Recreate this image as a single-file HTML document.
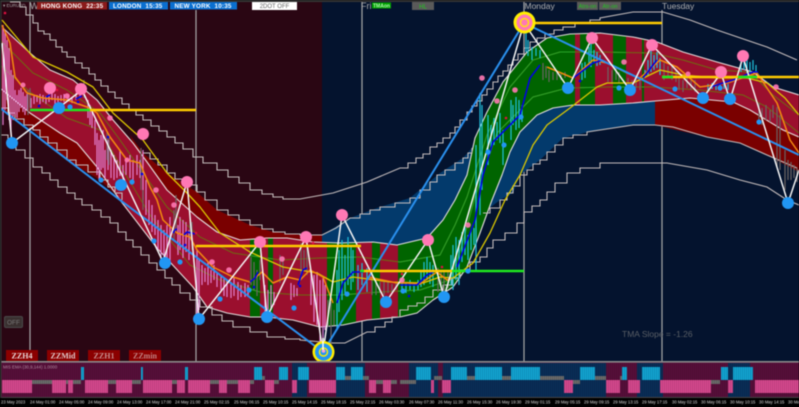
<!DOCTYPE html>
<html><head><meta charset="utf-8"><style>
html,body{margin:0;padding:0;background:#000;width:799px;height:407px;overflow:hidden}
svg{display:block;filter:blur(.4px)}
text{font-family:"Liberation Sans",sans-serif}
</style></head><body>
<svg xmlns="http://www.w3.org/2000/svg" width="799" height="407" viewBox="0 0 799 407">
<defs>
<clipPath id="ch"><path d="M0,22 3,28 30,53 50,70 73,80 97,100 113,120 133,143 147,162 167,190 197,217 217,232 240,240 267,238 287,238 313,242 340,243 373,242 397,245 427,238 443,220 455,200 467,175 475,138 487,112 503,82 527,52 547,38 570,34 600,33 633,37 657,42 683,52 717,62 753,72 773,87 799,95 799,137 783,130 750,110 733,102 690,98 655,101 633,103 600,105 573,105 553,108 537,115 520,132 510,152 502,175 492,200 480,233 467,267 453,287 433,300 417,313 400,317 367,320 343,325 320,327 293,320 267,317 250,317 227,313 207,307 193,287 157,248 120,200 97,167 77,143 60,133 30,113 0,88Z"/></clipPath>
<clipPath id="up"><path d="M130,135 143,153 167,173 197,192 217,210 250,225 273,232 300,235 322,235 350,218 380,207 410,198 440,173 463,158 472,148 475,138 467,175 455,200 443,220 427,238 397,245 373,242 340,243 313,242 287,238 267,238 240,240 217,232 197,217 167,190 147,162 133,143Z"/></clipPath>
<clipPath id="lo"><path d="M480,233 492,200 502,175 510,152 520,132 537,115 553,108 573,105 600,105 633,103 655,101 690,98 733,102 750,110 783,130 799,137 799,172 767,155 740,143 707,137 655,125 633,125 597,130 563,138 540,160 520,175 513,193 500,200 483,213Z"/></clipPath>
<clipPath id="gr"><path d="M250,0h10v362h-10zM268,0h5v362h-5zM327,0h29v362h-29zM372,0h8v362h-8zM398,0h177v362h-177zM580,0h15v362h-15zM613,0h13v362h-13zM642,0h2v362h-2z"/></clipPath>
<pattern id="st" width="2" height="10" patternUnits="userSpaceOnUse"><rect width="1" height="10" fill="#000" opacity=".16"/></pattern>
</defs>
<!-- backgrounds -->
<rect width="799" height="407" fill="#04132e"/>
<rect width="322" height="362" fill="#2a0613"/>
<rect width="799" height="2" fill="#333"/>
<!-- verticals -->
<g stroke="#a8a8a8" stroke-width="1.2"><path d="M30,2V362M196,10V362M362,2V362M524,2V362M662,10V362"/></g>
<!-- band fills -->
<g clip-path="url(#up)"><rect x="0" y="0" width="322" height="362" fill="#7a0000"/><rect x="322" y="0" width="300" height="362" fill="#033a6c"/></g>
<g clip-path="url(#lo)"><rect x="400" y="0" width="255" height="362" fill="#033a6c"/><rect x="655" y="0" width="144" height="362" fill="#7a0000"/></g>
<path d="M0,88 30,113 60,133 77,143 97,167 120,200 122,200 100,180 67,160 33,130 0,108Z" fill="#7a0000"/>
<g clip-path="url(#ch)"><rect width="799" height="362" fill="#9b0f2e"/><path d="M250,0h10v362h-10zM268,0h5v362h-5zM327,0h29v362h-29zM372,0h8v362h-8zM398,0h177v362h-177zM580,0h15v362h-15zM613,0h13v362h-13zM642,0h2v362h-2z" fill="#006400"/></g>
<!-- thin mid lines -->
<g fill="none" stroke="#6f6a10" stroke-width="1">
<path d="M0,40 33,73 67,90 100,113 120,140 167,207 200,237 233,253 280,260 320,258 360,257 400,262 440,255 455,225 467,197 487,135 510,87 533,60 560,52 600,52 653,53 683,60 717,70 750,72 773,95 799,115"/>
<path d="M0,65 30,92 67,118 100,130 120,165 150,215 190,265 220,280 260,292 300,295 340,295 380,292 420,290 450,280 462,245 475,197 497,133 533,97 567,88 610,87 653,87 700,90 743,95 767,107 799,133"/>
</g>
<g fill="none" stroke="#2aa32a" stroke-width="1" clip-path="url(#gr)">
<path d="M0,40 33,73 67,90 100,113 120,140 167,207 200,237 233,253 280,260 320,258 360,257 400,262 440,255 455,225 467,197 487,135 510,87 533,60 560,52 600,52 653,53 683,60 717,70 750,72 773,95 799,115"/>
<path d="M0,65 30,92 67,118 100,130 120,165 150,215 190,265 220,280 260,292 300,295 340,295 380,292 420,290 450,280 462,245 475,197 497,133 533,97 567,88 610,87 653,87 700,90 743,95 767,107 799,133"/>
</g>
<!-- band outlines -->
<g fill="none" stroke="#e6dede" stroke-width="1.1" stroke-linejoin="round">
<path d="M3,28 30,53 50,70 73,80 97,100 113,120 133,143 147,162 167,190 197,217 217,232 240,240 267,238 287,238 313,242 340,243 373,242 397,245 427,238 443,220 455,200 467,175 475,138 487,112 503,82 527,52 547,38 570,34 600,33 633,37 657,42 683,52 717,62 753,72 773,87 799,95"/>
<path d="M0,88 30,113 60,133 77,143 97,167 120,200 157,248 193,287 207,307 227,313 250,317 267,317 293,320 320,327 343,325 367,320 400,317 417,313 433,300 453,287 467,267 480,233 492,200 502,175 510,152 520,132 537,115 553,108 573,105 600,105 633,103 655,101 690,98 733,102 750,110 783,130 799,137"/>
</g>
<!-- stepped envelopes -->
<g fill="none" stroke="#c4bcbc" stroke-width="1.1">
<path d="M10,2H20V7H26V15H33V23H38V31H44V34H50V40H56V47H62V52H67V57H75V63H82V68H89V74H95V80H101V86H108V92H115V98H122V104H129V110H136V115H143V120H151V126H159V131H167V137H175V143H183V149H193V157H203V163H217V170H228V177H239V183H250V190H262V194H273V197H283V199H300L333,193 367,182 400,168H408V163H416V158H423V154H430V147H437V143H443V138H450V133H455V127H460V120H467V112H472V106H477V101H482V95H487V89H493V82H498V76H503V71H508V65H513V60H518V54H524V48H530V42H537V38H545V34H554V30H563V27H575V23H590V20H600V18L633,12 663,12 690,20 717,30 767,47 797,60"/>
<path d="M143,153H150V159H158V165H167V173H175V179H186V185H197V192H205V200H217V210H228V215H239V220H250V225H262V229H273V232H285V234H300V235L322,235 336,228 350,218H360V214H370V210H380V207H395V203H410V198H420V190H430V182H437V175H445V170H455V163H463V158H468V153H472V148"/>
<path d="M0,108H8V113H15V119H24V125H33V130H40V137H48V143H57V150H67V160H76V165H88V172H100V180H108V187H115V193H122V200"/>
<path d="M483,213H490V208H500V200H507V193H513V186H520V175H527V170H533V164H540V160H547V152H555V145H563V138H573V135H587V132L633,125 655,125 673,127 707,137 740,143 767,155 797,168"/>
<path d="M0,135H8V142H16V150H25V158H33V167H42V173H50V180H58V187H67V193H75V199H82V205H92V210H101V217H110V223H118V232H126V240H133V247H141V255H149V263H157V270H165V278H172V285H180V293H190V300H200V307H212V315H222V321H233V327H250V332H267V337H285V339H300V340L333,343H345L367,332H375V327H385V322H392V317H400V310H408V306H417V303H425V297H433V290H443V285H452V278H460V270H470V262H480V257H487V248H493V240H505V233H517V223H524V212H532V206H540V200H547V192H555V183H567V173H580V168H600V163L667,163 707,170 740,180 767,187 787,200 799,205"/>
</g>
<!-- candles -->
<g fill="none" stroke-width="1.2">
<path stroke="#e27fd0" d="M3,25V125M5,30V110M7,40V100M9,48V120M11,70V135M13,75V120M15,90V115M17,95V118M19,90V112M21,88V108M23,92V112M25,96V115M27,94V110M31,98V108M34,96V104M37,95V102M40,94V104M43,95V102M46,96V104M49,94V102M52,92V100M55,94V104M58,96V102M61,95V101M64,94V102M68,95V101M72,97V103M76,93V100M80,92V98M88,100V118M90,105V125M92,112V128M95,120V145M97,133V175M99,140V180M101,135V170M103,130V168M105,150V178M108,140V170M111,150V178M114,155V180M117,160V178M120,150V176M123,165V180M126,160V175M130,155V178M133,160V180M137,155V175M140,160V178M143,150V200M146,180V215M149,200V225M152,205V232M155,215V235M158,220V250M161,225V262M164,230V265M167,225V258M170,217V262M178,225V255M180,217V250M183,220V258M186,222V252M189,230V260M197,250V318M199,260V310M202,265V285M205,268V282M208,262V285M211,270V283M214,265V280M217,272V287M221,275V290M224,278V296M227,280V297M231,282V298M234,278V296M238,282V300M241,285V297M245,283V297M248,285V295M265,285V318M268,290V315M271,285V310M274,292V305M291,283V300M294,285V297M297,288V296M311,270V305M314,275V322M317,272V325M320,280V352M323,278V342M325,285V330"/>
<path stroke="#1fc0dc" d="M337,270V330M339,250V312M342,240V300M345,255V295M348,237V285M351,245V290M353,250V282M358,265V290M362,263V285M367,268V292M402,280V292M406,282V293M410,280V290M414,283V292M418,280V290M421,270V287M424,262V285M427,257V280M430,262V284M433,265V287M451,255V285M453,245V290M456,237V280M459,240V285M462,232V262M465,227V255M468,235V260M471,230V250M474,228V245M476,145V270M480,93V215M482,105V190M488,115V165M491,125V150M494,118V145M497,122V140M500,113V143M503,130V165M511,100V140M513,105V125M516,97V130M519,100V128M522,105V122M526,33V52M528,40V56M532,47V60M536,48V56M540,50V58M582,63V80M585,62V78M589,47V65M591,43V67M594,50V62M597,52V66M600,55V65M645,70V78M648,60V76M651,50V72M654,55V70M657,52V68M660,58V75M708,84V90M712,83V89M716,85V90M720,84V90M724,83V89M728,84V90M741,60V72M744,57V70M747,60V73M750,62V72M753,60V70M756,65V74"/>
<path stroke="#6c6464" d="M28,90V115M30,88V108M84,80V98M107,132V160M109,135V165M141,148V190M143,190V210M174,210V240M176,195V232M190,217V240M192,222V250M251,257V285M254,262V290M257,270V296M260,260V280M280,255V283M283,257V275M301,243V280M304,250V270M307,245V275M328,300V327M331,302V345M334,310V325M372,270V295M376,280V295M380,282V293M384,280V295M388,282V293M392,284V292M396,282V290M438,268V292M441,272V290M444,270V295M448,272V288M543,63V80M546,66V78M549,70V82M553,72V80M557,72V80M561,74V80M565,72V78M608,67V82M612,70V84M616,68V80M619,72V83M628,78V90M632,80V92M636,78V88M640,80V90M664,63V80M668,66V78M672,65V80M676,70V82M679,78V90M683,80V92M687,78V88M691,80V90M695,80V92M759,103V123M762,108V125M766,105V120M770,110V122M773,105V118M777,107V167M780,115V170M785,150V190M788,160V180M791,162V180M794,165V178M797,168V182"/>
</g>
<!-- MAs -->
<g fill="none" stroke-linejoin="round">
<path stroke="#dcc800" stroke-width="1.3" d="M2,20 13,33 33,57 67,72 93,87 113,113 143,140 167,173 187,193 200,207 220,233 250,252 283,267 317,273 333,282 353,277 390,282 423,283 440,277 453,278 473,263 490,233 505,200 520,175 533,145 547,125 570,108 597,87 607,83 633,83 660,70 683,75 717,78 747,78 767,83 785,98 799,115"/>
<g stroke="#f28a10" stroke-width="1.5">
<path d="M2,25 10,43 15,77 27,93 43,98 67,100 87,107 97,113 110,137 127,160 140,163 150,187 157,200 163,220 177,233 190,237 197,250 213,267 233,277 250,282 262,272 273,283 287,277 300,280 310,270 323,277 333,303"/>
<path d="M368,277 397,283 407,283 420,284 437,272 447,280 451,279"/>
<path d="M547,67 573,78 593,60 607,63 627,73 640,78 660,60 677,67 700,87 727,83 757,73 777,103 790,140 799,153"/>
</g>
<g stroke="#0000e0" stroke-width="1.6">
<path d="M457,267 475,220 483,175 493,142 520,115 530,78 540,65"/>
<path d="M337,303 343,283 353,272 363,272"/>
<path d="M400,285 417,285 427,275 433,272"/>
<path d="M573,78 593,63 603,60"/>
<path d="M643,78 657,60"/>
<path d="M710,87 733,80 753,72 758,72"/>
<path d="M250,282 255,278 258,272"/>
<path d="M298,285 303,270 307,268"/>
<path d="M173,233 175,230 177,229"/>
<path d="M184,235 187,232 195,234"/>
<path d="M46,97 50,95"/><path d="M76,99 82,96"/>
</g>
</g>
<!-- small blue points -->
<g fill="#0000e0"><circle cx="39" cy="106" r="1.3"/><circle cx="78" cy="102" r="1.3"/><circle cx="108" cy="137" r="1.3"/><circle cx="142" cy="174" r="1.3"/><circle cx="185" cy="245" r="1.3"/><circle cx="254" cy="287" r="1.3"/><circle cx="300" cy="286" r="1.3"/><circle cx="409" cy="296" r="1.3"/><circle cx="580" cy="81" r="1.3"/></g>
<g fill="#e01040"><circle cx="5" cy="13" r="1.3"/><circle cx="57" cy="90" r="1.3"/><circle cx="143" cy="130" r="1.3"/><circle cx="196" cy="233" r="1.3"/><circle cx="313" cy="243" r="1.3"/><circle cx="402" cy="274" r="1.3"/><circle cx="442" cy="267" r="1.3"/><circle cx="506" cy="118" r="1.3"/></g>
<!-- blue trend lines -->
<g fill="none" stroke="#2a90ee" stroke-width="2"><path d="M0,108 120,200 323,352 524,23 799,155"/></g>
<!-- white zigzag -->
<g fill="none" stroke="#f4f4f4" stroke-width="1.5" stroke-linejoin="round">
<path d="M2,43 12,143 82,90 163,262 187,182 199,319 260,242 267,317 306,237 323,353 342,215 386,302 428,240 444,297 524,23 568,88 592,38 630,90 652,45 703,98 721,73 730,100 743,57 788,203 799,170"/>
</g>
<!-- h lines -->
<g stroke-width="2.4" fill="none">
<path stroke="#ffcc00" d="M90,110H196M196,246H361M363,271H452M524,23H662M662,77H799"/>
<path stroke="#1fe81f" d="M30,110H90M360,271H364M452,271H524M662,77H673M738,77H757"/>
</g>
<!-- dots -->
<g fill="#ff78b4"><circle cx="50" cy="88" r="6"/><circle cx="81" cy="89" r="6"/><circle cx="143" cy="134" r="6"/><circle cx="187" cy="182" r="6"/><circle cx="260" cy="242" r="6"/><circle cx="306" cy="237" r="6"/><circle cx="342" cy="215" r="6"/><circle cx="428" cy="240" r="6"/><circle cx="592" cy="38" r="6"/><circle cx="652" cy="45" r="6"/><circle cx="721" cy="72" r="6"/><circle cx="743" cy="56" r="6"/>
<g opacity=".9"><circle cx="23" cy="85" r="2.5"/><circle cx="67" cy="96" r="2.8"/><circle cx="110" cy="118" r="2.8"/><circle cx="127" cy="160" r="2.5"/><circle cx="156" cy="190" r="2.8"/><circle cx="174" cy="205" r="2.8"/><circle cx="212" cy="262" r="2.8"/><circle cx="229" cy="270" r="2.8"/><circle cx="282" cy="259" r="2.8"/><circle cx="402" cy="280" r="2.8"/><circle cx="468" cy="225" r="2.8"/><circle cx="482" cy="78" r="2.8"/><circle cx="497" cy="101" r="2.8"/><circle cx="515" cy="90" r="2.8"/><circle cx="624" cy="62" r="2.8"/><circle cx="688" cy="74" r="2.5"/><circle cx="776" cy="87" r="2.8"/></g></g>
<g fill="#2196f3"><circle cx="12" cy="143" r="6"/><circle cx="59" cy="108" r="6"/><circle cx="121" cy="185" r="6"/><circle cx="165" cy="263" r="6"/><circle cx="199" cy="319" r="6"/><circle cx="267" cy="317" r="6"/><circle cx="386" cy="302" r="6"/><circle cx="444" cy="297" r="6"/><circle cx="568" cy="88" r="6"/><circle cx="630" cy="90" r="6"/><circle cx="703" cy="98" r="6"/><circle cx="730" cy="99" r="6"/><circle cx="788" cy="203" r="6"/>
<circle cx="70" cy="107" r="2.6"/><circle cx="101" cy="180" r="2.6"/><circle cx="132" cy="182" r="2.6"/><circle cx="154" cy="241" r="2.6"/><circle cx="180" cy="262" r="2.6"/><circle cx="220" cy="299" r="2.6"/><circle cx="249" cy="290" r="2.6"/><circle cx="294" cy="308" r="2.6"/><circle cx="347" cy="294" r="2.6"/><circle cx="403" cy="291" r="2.6"/><circle cx="468" cy="271" r="2.6"/><circle cx="488" cy="152" r="2.6"/><circle cx="504" cy="145" r="2.6"/><circle cx="521" cy="117" r="2.6"/><circle cx="619" cy="88" r="2.6"/><circle cx="675" cy="89" r="2.6"/><circle cx="720" cy="88" r="2.6"/><circle cx="759" cy="122" r="2.6"/></g>
<!-- targets -->
<circle cx="524.500" cy="22.500" r="11" fill="#ffee00"/><circle cx="524.500" cy="22.500" r="8" fill="#ff78b4"/><circle cx="524.500" cy="22.500" r="4" fill="none" stroke="#ffee00" stroke-width="1.300"/>
<circle cx="323.500" cy="352" r="11" fill="#ffee00"/><circle cx="323.500" cy="352" r="8.500" fill="#2196f3"/><circle cx="323.500" cy="352" r="4" fill="none" stroke="#ffee00" stroke-width="1.400"/><circle cx="323.500" cy="351" r="1.800" fill="#ff9fd0"/><path d="M323,338V350" stroke="#fff" stroke-width="1.5"/>
<!-- indicator pane -->
<rect x="0" y="362" width="799" height="35" fill="#5a0f3c"/>
<g fill="#0a2f5a"><rect x="292" y="363" width="15" height="34"/><rect x="336" y="363" width="29" height="34"/><rect x="409" y="363" width="29" height="34"/><rect x="443" y="363" width="163" height="34"/><rect x="637" y="363" width="26" height="34"/><rect x="728" y="363" width="22" height="34"/></g>
<g fill="#12a8d8"><rect x="81" y="367" width="3" height="13"/><rect x="141" y="367" width="2" height="13"/><rect x="185" y="367" width="3" height="13"/><rect x="254" y="367" width="8" height="13"/><rect x="279" y="367" width="9" height="13"/><rect x="298" y="367" width="11" height="13"/><rect x="336" y="367" width="9" height="13"/><rect x="351" y="367" width="12" height="13"/><rect x="416" y="367" width="15" height="13"/><rect x="451" y="367" width="16" height="13"/><rect x="475" y="367" width="27" height="13"/><rect x="511" y="367" width="29" height="13"/><rect x="580" y="367" width="15" height="13"/><rect x="622" y="367" width="5" height="13"/><rect x="642" y="367" width="18" height="13"/><rect x="721" y="367" width="7" height="13"/><rect x="733" y="367" width="20" height="13"/></g>
<g fill="#dc4a92"><rect x="2" y="380" width="30" height="13"/><rect x="52" y="380" width="14" height="13"/><rect x="68" y="380" width="5" height="13"/><rect x="85" y="380" width="23" height="13"/><rect x="116" y="380" width="16" height="13"/><rect x="143" y="380" width="29" height="13"/><rect x="177" y="380" width="8" height="13"/><rect x="188" y="380" width="22" height="13"/><rect x="219" y="380" width="8" height="13"/><rect x="238" y="380" width="12" height="13"/><rect x="265" y="380" width="9" height="13"/><rect x="292" y="380" width="5" height="13"/><rect x="309" y="380" width="27" height="13"/><rect x="369" y="380" width="7" height="13"/><rect x="383" y="380" width="8" height="13"/><rect x="431" y="380" width="3" height="13"/><rect x="442" y="380" width="9" height="13"/><rect x="564" y="380" width="9" height="13"/><rect x="606" y="380" width="14" height="13"/><rect x="628" y="380" width="12" height="13"/><rect x="660" y="380" width="51" height="13"/><rect x="728" y="380" width="5" height="13"/><rect x="755" y="380" width="44" height="13"/></g>
<g fill="#6e6e6e"><rect x="32" y="380" width="20" height="4"/><rect x="66" y="380" width="2" height="4"/><rect x="73" y="380" width="8" height="4"/><rect x="108" y="380" width="8" height="4"/><rect x="132" y="380" width="9" height="4"/><rect x="172" y="380" width="5" height="4"/><rect x="210" y="380" width="9" height="4"/><rect x="227" y="380" width="11" height="4"/><rect x="250" y="380" width="4" height="4"/><rect x="274" y="380" width="5" height="4"/><rect x="376" y="380" width="7" height="4"/><rect x="391" y="380" width="6" height="4"/><rect x="400" y="380" width="16" height="4"/><rect x="573" y="380" width="7" height="4"/><rect x="711" y="380" width="9" height="4"/>
<rect x="262" y="376" width="3" height="4"/><rect x="345" y="376" width="6" height="4"/><rect x="363" y="376" width="6" height="4"/><rect x="434" y="376" width="8" height="4"/><rect x="467" y="376" width="8" height="4"/><rect x="502" y="376" width="9" height="4"/><rect x="540" y="376" width="24" height="4"/><rect x="595" y="376" width="11" height="4"/><rect x="620" y="376" width="2" height="4"/></g>
<rect x="0" y="363" width="799" height="34" fill="url(#st)"/>
<rect x="0" y="361" width="799" height="1.6" fill="#8a8a8a"/>
<rect x="0" y="397" width="799" height="10" fill="#000"/>
<rect x="0" y="397" width="799" height="1" fill="#444"/>
<rect x="0" y="0" width="1.5" height="398" fill="#333"/>
<text x="3" y="368.500" font-size="4.400" fill="#b08aa0">MIS EMA (30,9,144) 1.0000</text>
<!-- axis -->
<g font-size="4.200" fill="#d8d8d8">
<text x="1" y="403.500">23 May 2023</text><text x="30" y="403.500">24 May 01:00</text><text x="59" y="403.500">24 May 05:00</text><text x="88" y="403.500">24 May 09:00</text><text x="117" y="403.500">24 May 13:00</text><text x="146" y="403.500">24 May 17:00</text><text x="175" y="403.500">24 May 21:00</text><text x="204" y="403.500">25 May 02:15</text><text x="234" y="403.500">25 May 06:15</text><text x="263" y="403.500">25 May 10:15</text><text x="292" y="403.500">25 May 14:15</text><text x="321" y="403.500">25 May 18:15</text><text x="350" y="403.500">25 May 22:15</text><text x="379" y="403.500">26 May 03:30</text><text x="409" y="403.500">26 May 07:30</text><text x="438" y="403.500">26 May 11:30</text><text x="467" y="403.500">26 May 15:30</text><text x="496" y="403.500">26 May 19:30</text><text x="525" y="403.500">29 May 01:15</text><text x="555" y="403.500">29 May 05:15</text><text x="584" y="403.500">29 May 09:15</text><text x="613" y="403.500">29 May 13:15</text><text x="642" y="403.500">29 May 17:15</text><text x="672" y="403.500">30 May 02:15</text><text x="701" y="403.500">30 May 06:15</text><text x="730" y="403.500">30 May 10:15</text><text x="759" y="403.500">30 May 14:15</text><text x="788" y="403.500">30 May</text>
</g>
<!-- top bar -->
<text x="30" y="9" font-size="9" fill="#aaa">W</text>
<text x="3" y="7" font-size="4.500" fill="#aaa">▾ EURUSD</text>
<rect x="37" y="2" width="70" height="7.500" fill="#8b1a1a"/>
<rect x="109" y="2" width="59" height="7.500" fill="#0a6fd0"/>
<rect x="170" y="2" width="67" height="7.500" fill="#0a6fd0"/>
<g font-size="6.300" font-weight="bold" fill="#fff" letter-spacing=".2">
<text x="41" y="8" xml:space="preserve">HONG KONG  22:35</text>
<text x="113" y="8" xml:space="preserve">LONDON  15:35</text>
<text x="174.500" y="8" xml:space="preserve">NEW YORK  10:35</text>
</g>
<rect x="252" y="2" width="45" height="8" fill="#fff"/>
<text x="274.500" y="8.200" font-size="6" fill="#666" text-anchor="middle">2DOT OFF</text>
<text x="361" y="9" font-size="9" fill="#aaa">Fri</text>
<rect x="372" y="2.500" width="19" height="6" fill="#00a000"/>
<text x="373" y="7.500" font-size="5" font-weight="bold" fill="#aef5ae">TMAon</text>
<rect x="412" y="2" width="22" height="8" fill="#5a5a5a"/>
<text x="423" y="8.300" font-size="6" fill="#1fc81f" text-anchor="middle">HL</text>
<text x="524.500" y="9" font-size="8.500" fill="#b0b0b0">Monday</text>
<rect x="577" y="2" width="21" height="8" fill="#5a5a5a"/><rect x="599" y="2" width="22" height="8" fill="#5a5a5a"/>
<text x="587.500" y="8.200" font-size="5.500" fill="#1fc81f" text-anchor="middle">Atrs-on</text>
<text x="610" y="8.200" font-size="5.500" fill="#1fc81f" text-anchor="middle">Atr-on</text>
<text x="662" y="9" font-size="8.500" fill="#b0b0b0">Tuesday</text>
<!-- buttons -->
<rect x="4.500" y="316.500" width="18" height="11" rx="1.500" fill="#3a3030" stroke="#4a4a4a"/>
<text x="13.500" y="324.500" font-size="6.500" fill="#777" text-anchor="middle">OFF</text>
<g fill="#8b0000"><rect x="6" y="350" width="32" height="11"/><rect x="47" y="350" width="32" height="11"/><rect x="88" y="350" width="32" height="11"/><rect x="129" y="350" width="32" height="11"/></g>
<g font-size="8" font-weight="bold" text-anchor="middle">
<text x="22" y="358.500" fill="#e8d8d8" style="font-family:'Liberation Serif',serif">ZZH4</text>
<text x="63" y="358.500" fill="#e0c8c8" style="font-family:'Liberation Serif',serif">ZZMid</text>
<text x="104" y="358.500" fill="#c89090" style="font-family:'Liberation Serif',serif">ZZH1</text>
<text x="145" y="358.500" fill="#c08080" style="font-family:'Liberation Serif',serif">ZZmin</text>
</g>
<text x="622" y="337" font-size="8.500" fill="#5a5f66">TMA Slope = -1.26</text>
</svg>
</body></html>
